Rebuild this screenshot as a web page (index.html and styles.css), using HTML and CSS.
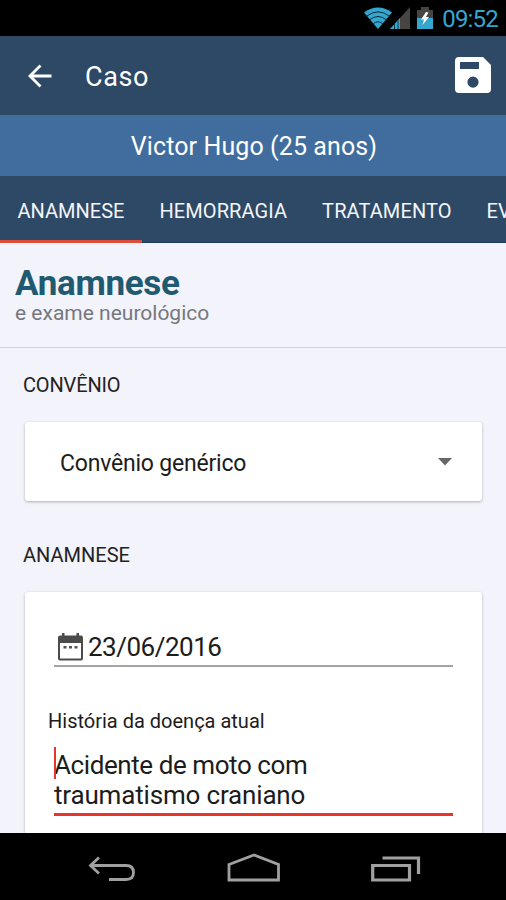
FILE: index.html
```html
<!DOCTYPE html>
<html lang="pt-BR">
<head>
<meta charset="utf-8">
<title>Caso</title>
<link rel="stylesheet" href="styles.css">
</head>
<body>
<div class="screen">
  <div class="status">
    <svg class="wifi" width="28" height="22" viewBox="0 0 28 22"><path d="M0 5.5Q14-4.5 28 5.5L14 22Z" fill="#35a7cf"/><path d="M2.500 9.200Q14 .5 25.500 9.200M5.300 13Q14 6 22.700 13M9 17Q14 12.500 19 17" fill="none" stroke="#0b2a38" stroke-width="1"/></svg>
    <svg class="signal" width="20" height="22" viewBox="0 0 20 22"><path d="M20 0V22H0Z" fill="#484442"/><path d="M10 11V22H0Z" fill="#35a7cf"/><path d="M4.500 17V22M8 13V22" stroke="#12394a" stroke-width="1"/></svg>
    <svg class="battery" width="16" height="22" viewBox="0 0 16 22"><path d="M4 0H12V3H16V22H0V3H4Z" fill="#484442"/><path d="M0 11H16V22H0Z" fill="#35a7cf"/><path d="M9 5L4 12.500H7L5.500 18L12 10H9L11.500 5.500Z" fill="#fff"/></svg>
    <span class="clock">09:52</span>
  </div>
  <header class="appbar">
    <svg class="back" width="24" height="24" viewBox="0 0 24 24"><path d="M12.500 1.500L2 12L12.500 22.500M2 12H23.500" fill="none" stroke="#fff" stroke-width="2.800"/></svg>
    <h1 class="title">Caso</h1>
    <svg class="save" width="36" height="36" viewBox="0 0 36 36"><path fill="#fff" fill-rule="evenodd" d="M4 0H28L36 8V32Q36 36 32 36H4Q0 36 0 32V4Q0 0 4 0ZM5 5V12H24V5ZM18 19.500A5.600 5.600 0 1 0 18 30.700A5.600 5.600 0 1 0 18 19.500Z"/></svg>
  </header>
  <div class="patient"><span class="patient-name">Victor Hugo (25 anos)</span></div>
  <nav class="tabs">
    <span class="tab active">ANAMNESE</span>
    <span class="tab wide">HEMORRAGIA</span>
    <span class="tab wide">TRATAMENTO</span>
    <span class="tab">EVOLUÇÃO</span>
  </nav>
  <section class="heading">
    <h2 class="heading-title">Anamnese</h2>
    <p class="heading-sub">e exame neurológico</p>
  </section>
  <main class="content">
    <h3 class="label label-first">CONVÊNIO</h3>
    <div class="card select">
      <span class="select-text">Convênio genérico</span>
      <svg width="14" height="8" viewBox="0 0 14 8"><path d="M0 0H14L7 7.500Z" fill="#666"/></svg>
    </div>
    <h3 class="label label-second">ANAMNESE</h3>
    <div class="card form">
      <div class="date">
        <svg width="25" height="28" viewBox="0 0 25 28"><path fill="#4b4b4b" fill-rule="evenodd" d="M4 0H6.500V2.500H18.500V0H21V2.500H23Q25 2.500 25 4.500V25.500Q25 27.500 23 27.500H2Q0 27.500 0 25.500V4.500Q0 2.500 2 2.500H4ZM2 10V25.500H23V10Z"/><path fill="#555" d="M5.500 13H8.500V15.500H5.500ZM11 13H14V15.500H11ZM16.500 13H19.500V15.500H16.500Z"/></svg>
        <span class="date-text">23/06/2016</span>
      </div>
      <div class="field-label">História da doença atual</div>
      <div class="history"><span class="caret"></span><span class="line1">Acidente de moto com</span><br><span class="line2">traumatismo craniano</span></div>
    </div>
  </main>
  <footer class="navbar">
    <svg width="48" height="28" viewBox="0 0 48 28"><path d="M11 3.500L2.500 11.500L11 19.500M2.500 11.500H38Q45.500 11.500 45.500 18.500Q45.500 25.500 38 25.500H21" fill="none" stroke="#a0a0a0" stroke-width="2.800"/></svg>
    <svg width="54" height="29" viewBox="0 0 54 29"><path d="M2 11.500L27 2L51.500 11.500V27H2Z" fill="none" stroke="#a0a0a0" stroke-width="2.800"/></svg>
    <svg class="recent" width="50" height="26" viewBox="0 0 50 26"><path d="M1.700 9.500H38.500V24H1.700ZM11.500 2H47.500V18" fill="none" stroke="#a0a0a0" stroke-width="3.200"/></svg>
  </footer>
</div>
</body>
</html>
```

FILE: styles.css
```css
* { box-sizing: border-box; }
body { margin: 0; font-family: Roboto, "Liberation Sans", sans-serif; color: #1c1c1c; }
h1, h2, h3, p { margin: 0; font-weight: 400; }
svg { display: block; flex: none; }
.screen { width: 506px; height: 900px; display: flex; flex-direction: column; overflow: hidden; background: #f2f3fb; }
.status { height: 36px; flex: none; background: #000; display: flex; align-items: center; justify-content: flex-end; padding: 0 8px 0 0; }
.signal { margin-left: -2px; }
.battery { margin: 0 9px 0 7px; }
.clock { font-size: 24px; line-height: 36px; color: #35a7cf; letter-spacing: -.8px; padding-top: 2px; }
.appbar { height: 79px; flex: none; background: #2e4965; display: flex; align-items: center; padding: 0 15px 0 28px; }
.title { margin-left: 33px; padding-top: 2px; font-size: 27px; line-height: 40px; color: #fff; letter-spacing: .6px; flex: 1; }
.save { margin-bottom: 2px; }
.patient { height: 61px; flex: none; background: #416d9e; color: #fff; text-align: center; line-height: 64px; font-size: 25px; letter-spacing: .1px; padding-left: 2px; }
.tabs { height: 67px; flex: none; background: #2e4965; border-bottom: 1px solid #17395a; display: flex; color: #f4f5fa; font-size: 20px; line-height: 70px; }
.tab { flex: none; padding: 0 17.500px; height: 67px; white-space: nowrap; }
.wide { letter-spacing: .1px; }
.active { border-bottom: 3px solid #dc4e3b; }
.heading { height: 105px; flex: none; padding: 21px 15px 0; border-bottom: 1px solid #d0d1d7; }
.heading-title { font-size: 35px; line-height: 40px; font-weight: 700; color: #215a70; letter-spacing: -.3px; }
.heading-sub { font-size: 21px; line-height: 24px; margin-top: -3px; color: #77777b; }
.content { flex: 1; min-height: 0; overflow: hidden; padding: 0 24px 0 25px; }
.label { font-size: 20px; line-height: 24px; margin-left: -2px; color: #222; }
.label-first { margin-top: 25px; letter-spacing: -.15px; }
.label-second { margin-top: 41px; padding-top: 1px; }
.card { background: #fff; border-radius: 3px; box-shadow: 0 1px 3px rgba(0,0,0,.28); }
.select { height: 79px; margin-top: 25px; display: flex; align-items: center; justify-content: space-between; padding: 0 30px 0 35px; font-size: 23px; }
.select-text { letter-spacing: -.2px; padding-top: 3px; }
.form { height: 400px; margin-top: 25px; padding: 39px 29px 0; }
.date { height: 36px; border-bottom: 2px solid #a4a4a4; display: flex; align-items: center; gap: 5px; padding: 0 0 2px 4px; font-size: 26px; }
.date-text { letter-spacing: -.5px; padding-bottom: 1px; }
.field-label { margin: 41px 0 0 -6px; font-size: 20px; line-height: 26px; }
.history { position: relative; margin-top: 16px; height: 66px; border-bottom: 3px solid #e8352a; font-size: 26px; line-height: 30px; }
.line1 { letter-spacing: -.42px; }
.line2 { letter-spacing: -.17px; }
.caret { position: absolute; left: 0; top: -3px; width: 2px; height: 32px; background: #e8352a; }
.navbar { height: 67px; flex: none; background: #000; display: flex; justify-content: space-between; align-items: center; padding: 2px 85px 0 88px; }
.recent { margin-top: 2px; }
```
